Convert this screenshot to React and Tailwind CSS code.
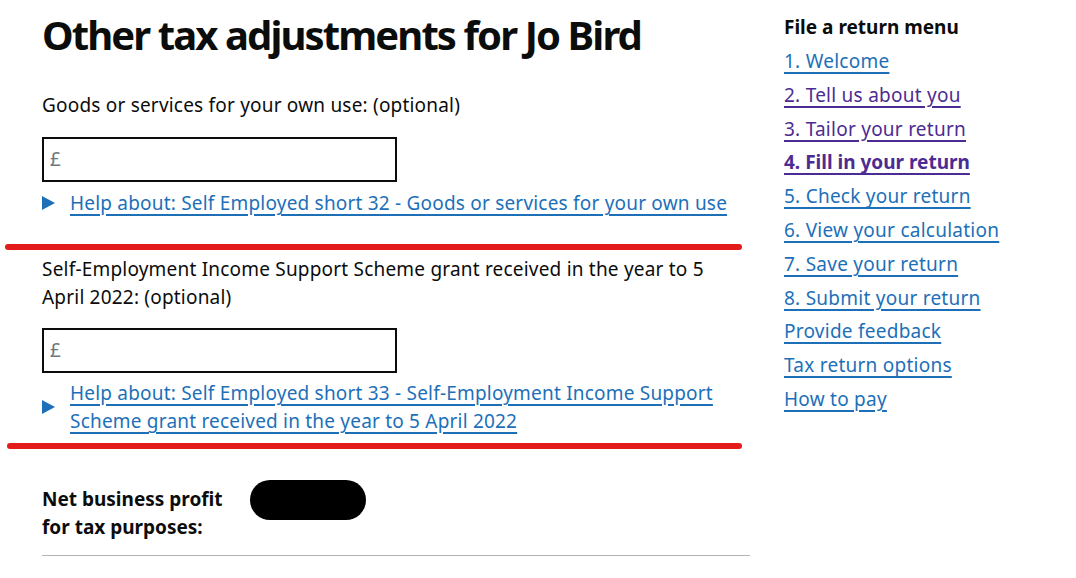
import React from "react";

const menu = [
    { name: "1. Welcome", visited: false },
    { name: "2. Tell us about you", visited: true },
    { name: "3. Tailor your return", visited: true },
    { name: "4. Fill in your return", visited: true, current: true },
    { name: "5. Check your return" },
    { name: "6. View your calculation" },
    { name: "7. Save your return" },
    { name: "8. Submit your return" },
    { name: "Provide feedback" },
    { name: "Tax return options" },
    { name: "How to pay" },
];

const linkClass =
    "underline decoration-[2px] underline-offset-[4px] text-[#1d70b8]";

// hand-drawn red annotation line on the screenshot
const RedMark = ({ className }) => (
    <div className={`h-[6px] rounded-full bg-[#e31b1b] ${className}`} />
);

const MoneyInput = () => (
    <div className="flex h-[45px] w-[355px] items-center border-2 border-[#0b0c0c] px-[6px] text-[19px] text-[#6f777b]">
        £
    </div>
);

const HelpToggle = ({ children }) => (
    <div className="flex items-center">
        <svg width="13" height="14" viewBox="0 0 13 14" className="mr-[15px] shrink-0">
            <polygon points="0,0 13,7 0,14" fill="#1d70b8" />
        </svg>
        <a href="#" className={`${linkClass} leading-[28px]`}>
            {children}
        </a>
    </div>
);

export default function App() {
    return (
        <div className="min-h-screen bg-white font-['Noto_Sans',Arial,sans-serif] text-[#0b0c0c]">
            <div className="flex pl-[42px] pt-[10px]">
                {/* MAIN COLUMN */}
                <main className="w-[708px] tracking-[0.2px]">
                    <h1 className="text-[40px] font-bold leading-[50px] tracking-[-1.9px]">
                        Other tax adjustments for Jo Bird
                    </h1>

                    <div className="mt-[31px] text-[19px] leading-[28px]">
                        Goods or services for your own use: (optional)
                    </div>
                    <div className="mt-[18px]">
                        <MoneyInput />
                    </div>
                    <div className="mt-[7px] text-[19px]">
                        <HelpToggle>
                            Help about: Self Employed short 32 - Goods or services for your own use
                        </HelpToggle>
                    </div>
                    <RedMark className="-ml-[37px] mt-[27px] w-[737px]" />

                    <div className="mt-[5px] w-[690px] text-[19px] leading-[28px]">
                        Self-Employment Income Support Scheme grant received in the year to 5 April 2022: (optional)
                    </div>
                    <div className="mt-[17px]">
                        <MoneyInput />
                    </div>
                    <div className="mt-[6px] w-[690px] text-[19px]">
                        <HelpToggle>
                            Help about: Self Employed short 33 - Self-Employment Income Support Scheme grant received in the year to 5 April 2022
                        </HelpToggle>
                    </div>
                    <RedMark className="-ml-[35px] mt-[8px] w-[735px]" />

                    <div className="mt-[36px] flex items-start border-b border-[#b1b4b6] pb-[14px]">
                        <div className="w-[208px] text-[19px] font-bold leading-[28px] tracking-normal">
                            Net business profit for tax purposes:
                        </div>
                        <div className="mt-[-5px] h-[40px] w-[116px] rounded-[20px] bg-black" />
                    </div>
                </main>

                {/* SIDEBAR MENU */}
                <aside className="ml-[34px] w-[260px]">
                    <h2 className="text-[19px] font-bold leading-[34px]">File a return menu</h2>
                    <ul className="mt-[1px]">
                        {menu.map((item) => (
                            <li key={item.name} className="text-[19px] leading-[33.8px]">
                                <a
                                    href="#"
                                    className={`underline decoration-[2px] underline-offset-[4px] ${
                                        item.visited ? "text-[#4c2c92]" : "text-[#1d70b8]"
                                    } ${item.current ? "font-bold" : "tracking-[0.25px]"}`}
                                >
                                    {item.name}
                                </a>
                            </li>
                        ))}
                    </ul>
                </aside>
            </div>
        </div>
    );
}
